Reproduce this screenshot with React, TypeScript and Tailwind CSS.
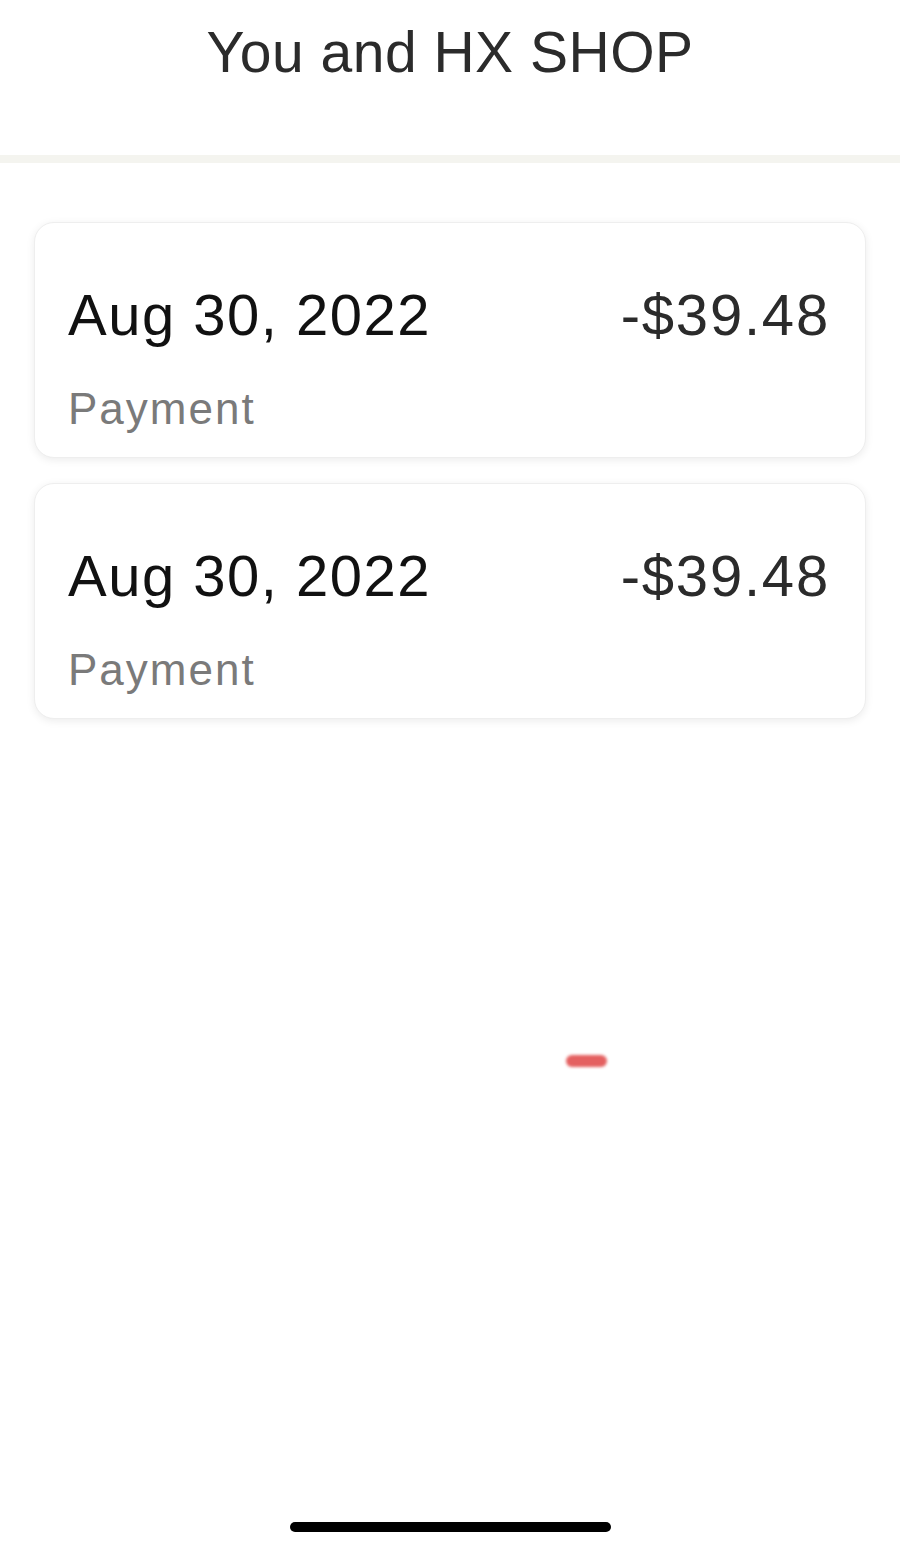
import React from "react";

const rows = [
  { date: "Aug 30, 2022", amount: "-$39.48", kind: "Payment" },
  { date: "Aug 30, 2022", amount: "-$39.48", kind: "Payment" },
];

const App = () => {
  return (
    <div
      className="relative flex flex-col w-[900px] h-[1549px] bg-white"
      style={{ fontFamily: '"Liberation Sans", Arial, sans-serif' }}
    >
      <div className="h-[155px] pt-[24px] flex justify-center">
        <p className="text-[57px] leading-none tracking-[0.5px] text-[#2b2b2b]">You and HX SHOP</p>
      </div>
      <div className="h-[8px] bg-[#f4f4ef]"></div>

      <div className="flex flex-col gap-[25px] px-[34px] pt-[59px]">
        {rows.map((r, i) => (
          <div
            key={i}
            className="h-[236px] rounded-[20px] bg-white border border-[#eeeeee] shadow-[0_2px_8px_rgba(0,0,0,0.08)] pl-[33px] pr-[35px] pt-[63px]"
          >
            <div className="flex justify-between">
              <p className="text-[58px] leading-none tracking-[1.5px] text-[#111111]">{r.date}</p>
              <p className="text-[58px] leading-none tracking-[1.8px] text-[#2b2b2b]">{r.amount}</p>
            </div>
            <p className="mt-[43px] text-[44px] leading-none tracking-[2px] text-[#7a7a7a]">{r.kind}</p>
          </div>
        ))}
      </div>

      <div className="flex-1"></div>
      <div className="flex justify-center pb-[17px]">
        <div className="w-[321px] h-[10px] rounded-full bg-black"></div>
      </div>

      <div className="absolute left-[566px] top-[1055px] w-[41px] h-[12px] rounded-full bg-[#e46060] blur-[1.5px]"></div>
    </div>
  );
};

export default App;
